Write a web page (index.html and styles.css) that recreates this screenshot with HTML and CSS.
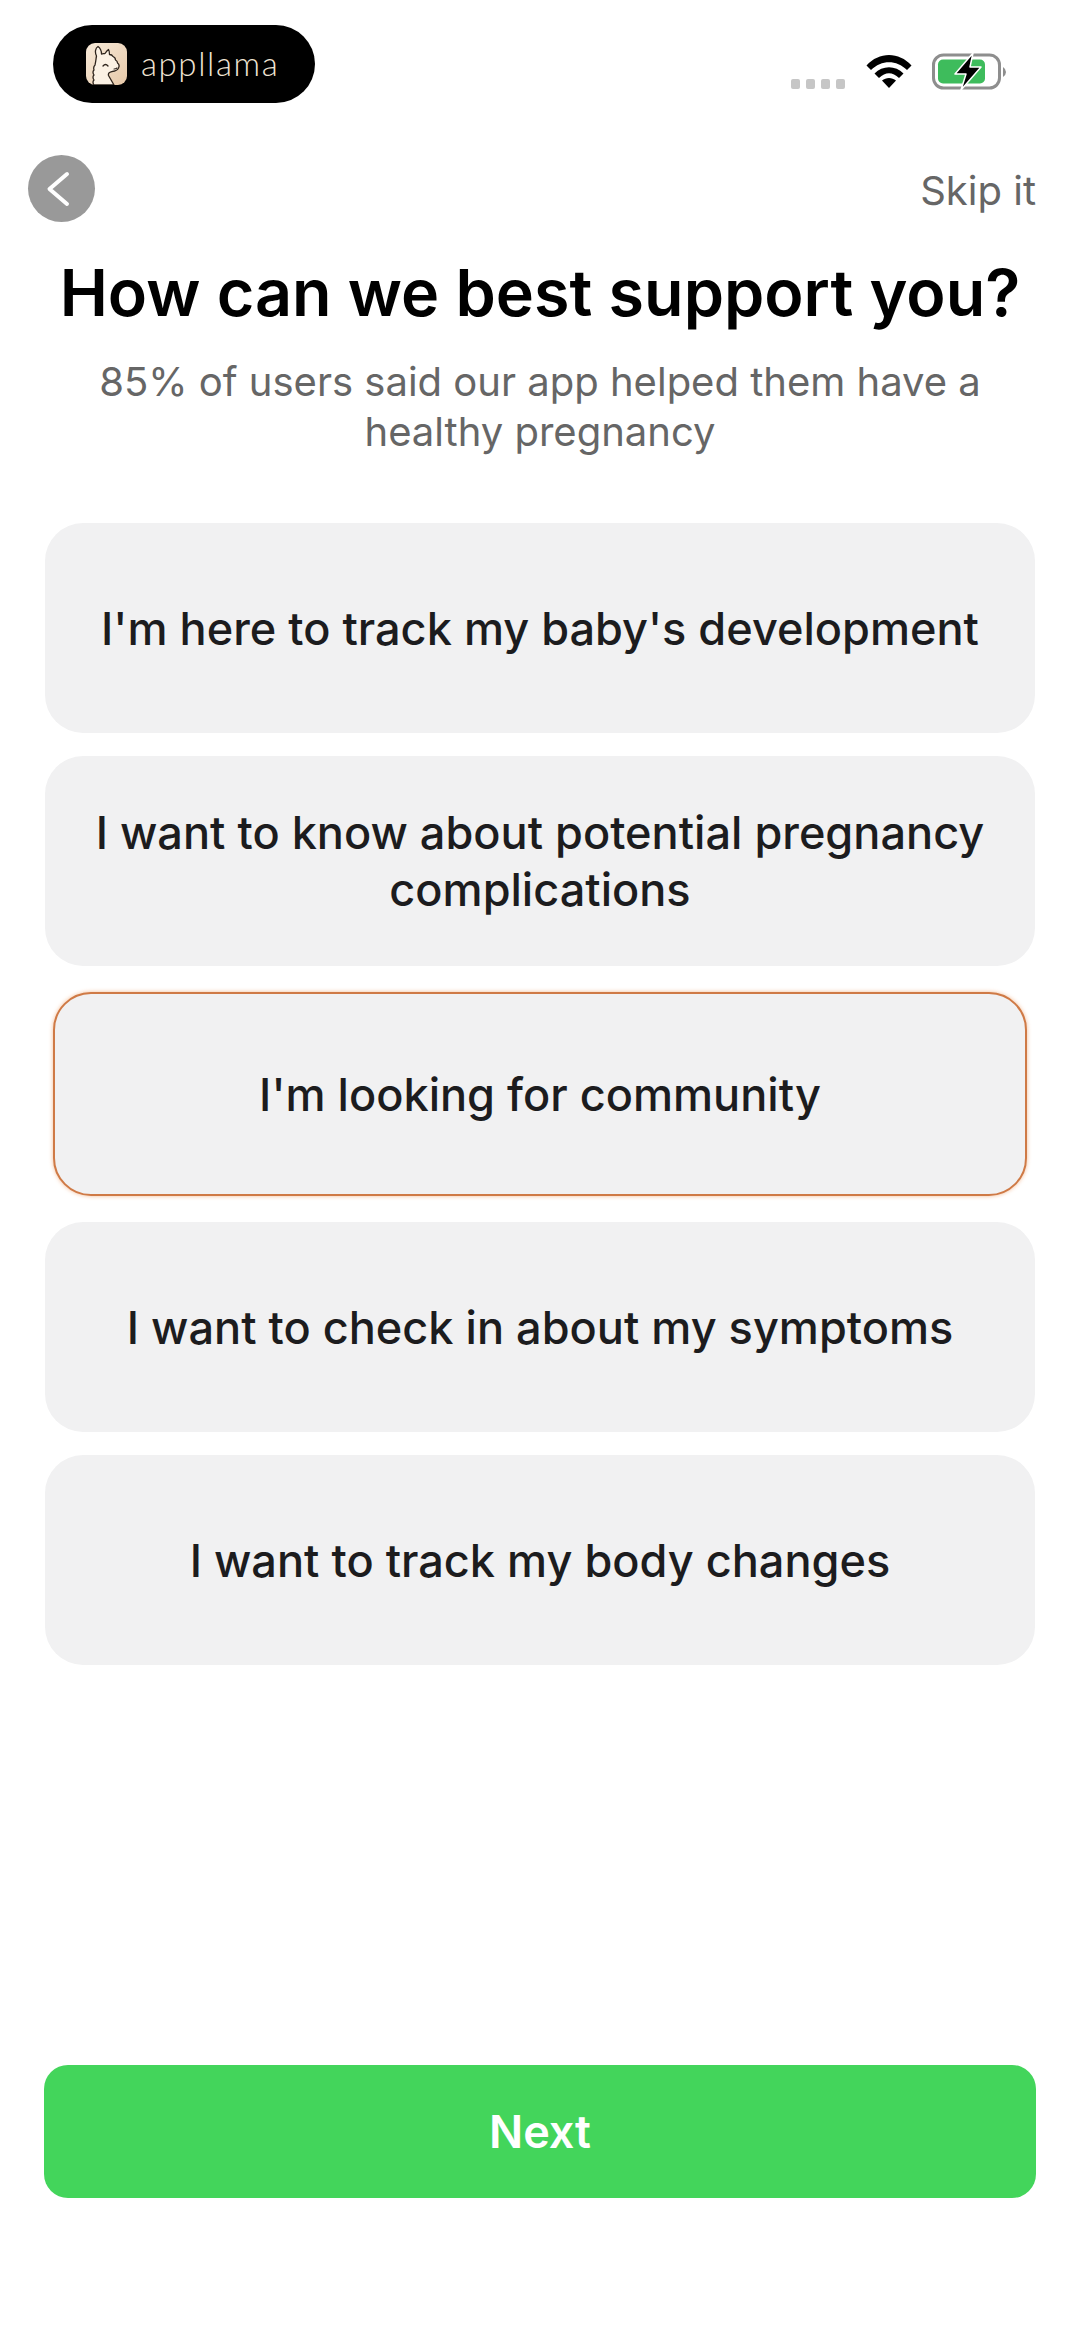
FILE: index.html
```html
<!DOCTYPE html>
<html lang="en">
<head>
    <meta charset="UTF-8">
    <meta name="viewport" content="width=device-width, initial-scale=1.0">
    <title>Support Options</title>
    <link rel="stylesheet" href="styles.css">
</head>
<body>
    <!-- Status bar -->
    <header class="status-bar">
        <div class="brand-pill">
            <svg class="brand-icon" viewBox="0 0 41 42">
                <defs>
                    <linearGradient id="iconBg" x1="0" y1="0" x2="1" y2="1">
                        <stop offset="0" stop-color="#f8ead9"/>
                        <stop offset="1" stop-color="#e6c8a8"/>
                    </linearGradient>
                </defs>
                <rect width="41" height="42" rx="9" fill="url(#iconBg)"/>
                <path d="M8 42 q-2 -3 0 -5 q-2 -3 0 -5 q-2 -3 0 -5 q-1 -3 1 -5 C10 18 10 15 10.500 13 C8.500 9 9.500 5 12 3.500 C14 5 15.500 8 15.500 11 C17 11 18 10.500 19 10.500 C20 9 21 7.500 22.500 6.500 C23.500 8 23.500 10 23.500 11.500 q2.500 0 3.500 2 q2.500 1 2.500 3.500 q2 1 2 3 q2 1.500 1.500 3.500 q-0.500 3.500 -4.500 4.500 q-3 0.500 -5 1.500 q-1.500 1 -1 3 L28 42 Z" fill="#fbf1e4" stroke="#2e241c" stroke-width="1.300" stroke-linejoin="round"/>
                <path d="M17 23 q2.500 -3 5 0" fill="none" stroke="#2e241c" stroke-width="1.300" stroke-linecap="round"/>
                <path d="M28 26 q2 0 3 -1" fill="none" stroke="#2e241c" stroke-width="1.100" stroke-linecap="round"/>
            </svg>
            <span class="brand-name">appllama</span>
        </div>
        <div class="status-icons">
            <div class="signal-dots">
                <span></span><span></span><span></span><span></span>
            </div>
            <svg class="wifi-icon" viewBox="0 0 46 34">
                <path d="M0.5 11.5 C13 -2.5 33 -2.5 45.5 11.5 L41 16 C30.500 5.500 15.500 5.500 5 16 Z"/>
                <path d="M8.500 19.500 C16.500 11 29.500 11 37.500 19.500 L33 24 C26.500 17.500 19.500 17.500 13 24 Z"/>
                <path d="M16 26.500 C20 23 26 23 30 26.500 L23 34 Z"/>
            </svg>
            <svg class="battery-icon" viewBox="0 0 76 38">
                <rect x="1.500" y="2" width="66" height="33" rx="10" fill="none" stroke="#8e8e8e" stroke-width="3"/>
                <rect x="6" y="6.500" width="47" height="24" rx="5" fill="#3ebc5c"/>
                <path d="M71 14 q3 2 3 5 q0 3 -3 5 Z" fill="#8e8e8e"/>
                <path d="M41 0 L23 21 L34 21 L29 37 L49 14 L38 14 Z" fill="#000" stroke="#fff" stroke-width="1.500" stroke-linejoin="round"/>
            </svg>
        </div>
    </header>

    <!-- Back and skip row -->
    <nav class="top-nav">
        <button class="back-btn">
            <svg viewBox="0 0 67 67">
                <path d="M39 19 L21.500 34 L39 49" fill="none" stroke="#fff" stroke-width="4" stroke-linecap="round" stroke-linejoin="round"/>
            </svg>
        </button>
        <span class="skip-link">Skip it</span>
    </nav>

    <main class="content">
        <h1 class="title">How can we best support you?</h1>
        <p class="subtitle">85% of users said our app helped them have a healthy pregnancy</p>

        <div class="options">
            <div class="option">I'm here to track my baby's development</div>
            <div class="option">I want to know about potential pregnancy complications</div>
            <div class="option selected">I'm looking for community</div>
            <div class="option">I want to check in about my symptoms</div>
            <div class="option">I want to track my body changes</div>
        </div>
    </main>

    <button class="next-btn">Next</button>
</body>
</html>
```

FILE: styles.css
```css
* {
    margin: 0;
    padding: 0;
    box-sizing: border-box;
}

body {
    width: 1080px;
    height: 2337px;
    background: #ffffff;
    font-family: "Inter", "Liberation Sans", sans-serif;
    display: flex;
    flex-direction: column;
    overflow: hidden;
}

.status-bar {
    display: flex;
    justify-content: space-between;
    padding: 25px 72px 0 53px;
    height: 155px;
}

.brand-pill {
    width: 262px;
    height: 78px;
    background: #000000;
    border-radius: 39px;
    display: flex;
    align-items: center;
    gap: 14px;
    padding-left: 33px;
}

.brand-icon {
    width: 41px;
    height: 42px;
}

.brand-name {
    font-family: "Lato", sans-serif;
    font-size: 33px;
    font-weight: 300;
    color: #f0e4d4;
    letter-spacing: 1.600px;
    margin-top: -2px;
}

.status-icons {
    display: flex;
    align-items: flex-start;
    padding-top: 28px;
}

.signal-dots {
    display: flex;
    gap: 6px;
    margin-top: 26px;
    margin-right: 21px;
}

.signal-dots span {
    width: 9px;
    height: 10px;
    border-radius: 2px;
    background: #c6c6c6;
}

.wifi-icon {
    width: 46px;
    height: 34px;
    margin-top: 1px;
    margin-right: 20px;
}

.battery-icon {
    width: 76px;
    height: 38px;
}

.top-nav {
    display: flex;
    justify-content: space-between;
    align-items: center;
    padding: 0 44px 0 28px;
    height: 67px;
}

.back-btn {
    width: 67px;
    height: 67px;
    border: none;
    border-radius: 50%;
    background: #999999;
}

.back-btn svg {
    display: block;
    width: 67px;
    height: 67px;
}

.skip-link {
    font-size: 40px;
    color: #666666;
    margin-top: 4px;
}

.content {
    padding: 31px 45px 0;
}

.title {
    font-size: 64.600px;
    line-height: 80px;
    font-weight: 600;
    color: #000000;
    text-align: center;
    white-space: nowrap;
}

.subtitle {
    font-size: 40px;
    line-height: 50px;
    color: #666666;
    text-align: center;
    padding: 0 20px;
    margin-top: 24px;
}

.options {
    display: flex;
    flex-direction: column;
    gap: 23px;
    margin-top: 66px;
}

.option {
    height: 210px;
    padding: 0 30px;
    background: #f1f1f2;
    border-radius: 38px;
    display: flex;
    align-items: center;
    justify-content: center;
    text-align: center;
    font-size: 45.100px;
    font-weight: 500;
    line-height: 57px;
    color: #1c1c1e;
}

.option.selected {
    margin: 3px 8px;
    height: 204px;
    border: 2.500px solid #cf7a46;
    box-shadow: 0 0 4px rgba(240, 170, 120, 0.8);
}

.next-btn {
    margin: auto 44px 139px;
    height: 133px;
    border: none;
    border-radius: 24px;
    background: #43d55b;
    color: #ffffff;
    font-family: inherit;
    font-size: 45px;
    font-weight: 600;
}
```
